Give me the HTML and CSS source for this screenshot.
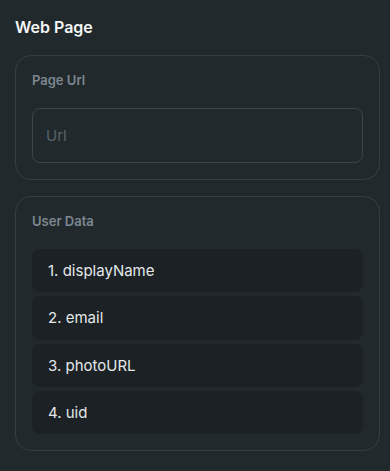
FILE: index.html
```html
<!DOCTYPE html>
<html>
<head>
<meta charset="utf-8">
<link rel="stylesheet" href="styles.css">
</head>
<body>
<div class="page">
  <h1 class="title">Web Page</h1>
  <section class="card">
    <div class="label">Page Url</div>
    <input class="input" type="text" placeholder="Url">
  </section>
  <section class="card">
    <div class="label">User Data</div>
    <ul class="list">
      <li class="item">1. displayName</li>
      <li class="item">2. email</li>
      <li class="item">3. photoURL</li>
      <li class="item">4. uid</li>
    </ul>
  </section>
</div>
</body>
</html>
```
FILE: styles.css
```css
html, body {
  margin: 0;
  padding: 0;
  background: #22292c;
  height: 100%;
}
body {
  font-family: Inter, "DejaVu Sans", sans-serif;
  color: #e4e8ea;
  overflow: hidden;
}
.page {
  padding: 15px 10px 0 15px;
  display: flex;
  flex-direction: column;
  gap: 16px;
}
.title {
  margin: 0;
  font-size: 16px;
  line-height: 24px;
  font-weight: 600;
  color: #f4f6f7;
  height: 24px;
}
.card {
  border: 1px solid #363e43;
  border-radius: 16px;
  padding: 16px;
  display: flex;
  flex-direction: column;
  gap: 20px;
}
.label {
  font-size: 13px;
  line-height: 16px;
  font-weight: 600;
  color: #7b8791;
}
.input {
  box-sizing: border-box;
  height: 55px;
  width: 100%;
  margin: 0;
  border: 1px solid #3c454a;
  border-radius: 8px;
  background: transparent;
  padding: 0 13px;
  font-family: inherit;
  font-size: 15px;
  color: #e4e8ea;
  outline: none;
}
.input::placeholder {
  color: #56626b;
}
.list {
  list-style: none;
  margin: 0;
  padding: 0;
  display: flex;
  flex-direction: column;
  gap: 4px;
}
.item {
  height: 43.25px;
  box-sizing: border-box;
  display: flex;
  align-items: center;
  padding: 0 16px;
  background: #1b2124;
  border-radius: 8px;
  font-size: 15px;
  color: #e4e8ea;
}
```
